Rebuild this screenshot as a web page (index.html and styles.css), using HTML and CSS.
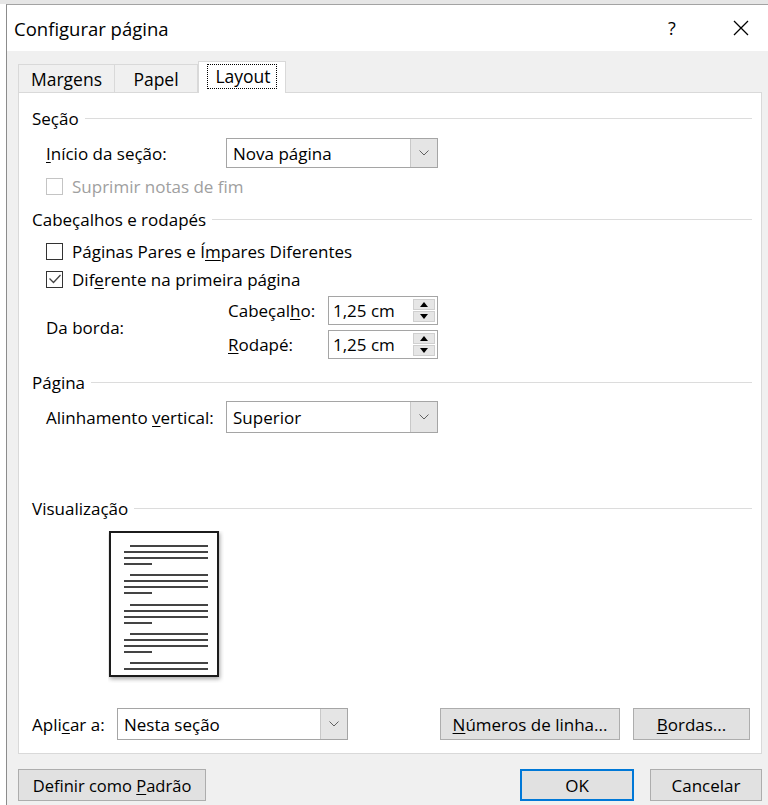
FILE: index.html
```html
<!DOCTYPE html>
<html lang="pt-BR">
<head>
<meta charset="utf-8">
<title>Configurar página</title>
<link rel="stylesheet" href="styles.css">
</head>
<body>
<div class="dialog">
  <header class="titlebar">
    <span class="title">Configurar página</span>
    <span class="help">?</span>
    <span class="close">
      <svg width="16" height="16" viewBox="0 0 16 16"><path d="M1 1 L15 15 M15 1 L1 15" stroke="#000" stroke-width="1.3" fill="none"/></svg>
    </span>
  </header>

  <div class="client">
    <div class="tabs">
      <div class="tab tab-margens">Margens</div>
      <div class="tab tab-papel">Papel</div>
      <div class="tab tab-layout active"><span class="focus">Layout</span></div>
    </div>

    <div class="panel">
      <div class="group-head g-secao"><span>Seção</span></div>
      <div class="row r-inicio indent">
        <span class="col-label"><u>I</u>nício da seção:</span>
        <div class="select sel-wide">
          <span class="value">Nova página</span>
          <span class="drop"><svg width="10" height="6" viewBox="0 0 10 6"><path d="M0.5 0.5 L5 5 L9.5 0.5" stroke="#606060" fill="none"/></svg></span>
        </div>
      </div>
      <div class="row r-suprimir indent disabled">
        <span class="check"></span>
        <span class="check-text">Suprimir notas de fim</span>
      </div>

      <div class="group-head g-cab"><span>Cabeçalhos e rodapés</span></div>
      <div class="row r-pares indent">
        <span class="check"></span>
        <span class="check-text">Páginas Pares e Í<u>m</u>pares Diferentes</span>
      </div>
      <div class="row r-dif indent">
        <span class="check checked"><svg width="14" height="14" viewBox="0 0 14 14"><path d="M1.5 6.5 L5.5 10.5 L12.5 3" stroke="#444" stroke-width="1.3" fill="none"/></svg></span>
        <span class="check-text">Dif<u>e</u>rente na primeira página</span>
      </div>
      <div class="borda indent">
        <span class="col-label">Da borda:</span>
        <div class="spins">
          <div class="spin-row">
            <span class="sub-label">Cabeçal<u>h</u>o:</span>
            <div class="spin">
              <span class="value">1,25 cm</span>
              <span class="arrows">
                <span class="arr"><svg width="8" height="5" viewBox="0 0 8 5"><path d="M4 0 L8 5 L0 5 Z" fill="#000"/></svg></span>
                <span class="arr"><svg width="8" height="5" viewBox="0 0 8 5"><path d="M0 0 L8 0 L4 5 Z" fill="#000"/></svg></span>
              </span>
            </div>
          </div>
          <div class="spin-row">
            <span class="sub-label"><u>R</u>odapé:</span>
            <div class="spin">
              <span class="value">1,25 cm</span>
              <span class="arrows">
                <span class="arr"><svg width="8" height="5" viewBox="0 0 8 5"><path d="M4 0 L8 5 L0 5 Z" fill="#000"/></svg></span>
                <span class="arr"><svg width="8" height="5" viewBox="0 0 8 5"><path d="M0 0 L8 0 L4 5 Z" fill="#000"/></svg></span>
              </span>
            </div>
          </div>
        </div>
      </div>

      <div class="group-head g-pagina"><span>Página</span></div>
      <div class="row r-alinh indent">
        <span class="col-label">Alinhamento <u>v</u>ertical:</span>
        <div class="select sel-wide sel-tall">
          <span class="value">Superior</span>
          <span class="drop"><svg width="10" height="6" viewBox="0 0 10 6"><path d="M0.5 0.5 L5 5 L9.5 0.5" stroke="#606060" fill="none"/></svg></span>
        </div>
      </div>

      <div class="group-head g-visual"><span>Visualização</span></div>
      <div class="preview">
        <svg width="116" height="152" viewBox="0 0 116 152">
          <defs>
            <filter id="pageShadow" x="-20%" y="-20%" width="140%" height="140%">
              <feDropShadow dx="1" dy="2" stdDeviation="2" flood-color="#000" flood-opacity="0.35"/>
            </filter>
          </defs>
          <rect x="2" y="1" width="108" height="144" fill="#fff" stroke="#1a1a1a" stroke-width="2" filter="url(#pageShadow)"/>
          <g stroke="#444" stroke-width="2">
            <path d="M22 15 H100 M16 21 H100 M16 27 H100 M16 33 H44"/>
            <path d="M22 44 H100 M16 50 H100 M16 56 H100 M16 62 H44"/>
            <path d="M22 74 H100 M16 80 H100 M16 86 H100 M16 92 H44"/>
            <path d="M22 103 H100 M16 109 H100 M16 115 H100 M16 121 H44"/>
            <path d="M22 132 H100 M16 138 H100"/>
          </g>
        </svg>
      </div>

      <div class="row r-aplicar">
        <span class="apl-label">Apli<u>c</u>ar a:</span>
        <div class="select sel-apl">
          <span class="value">Nesta seção</span>
          <span class="drop"><svg width="10" height="6" viewBox="0 0 10 6"><path d="M0.5 0.5 L5 5 L9.5 0.5" stroke="#606060" fill="none"/></svg></span>
        </div>
        <button class="btn btn-num"><span><u>N</u>úmeros de linha...</span></button>
        <button class="btn btn-bordas"><span><u>B</u>ordas...</span></button>
      </div>
    </div>

    <div class="footer">
      <button class="btn btn-padrao"><span>Definir como <u>P</u>adrão</span></button>
      <span class="spacer"></span>
      <button class="btn btn-ok default"><span>OK</span></button>
      <button class="btn btn-cancel"><span>Cancelar</span></button>
    </div>
  </div>
</div>
</body>
</html>
```

FILE: styles.css
```css
html, body {
  margin: 0;
  padding: 0;
}

body {
  background: #fff;
  border-top: 4px solid #e6e6e6;
  font-family: "Open Sans", "Noto Sans", sans-serif;
  font-size: 17px;
  color: #000;
  height: 801px;
  overflow: hidden;
}

u {
  text-decoration-thickness: 1px;
  text-underline-offset: 2px;
}

.dialog {
  margin-left: 6px;
  border-top: 1px solid #a3a3a3;
  border-left: 1px solid #8c8c8c;
  height: 800px;
  display: flex;
  flex-direction: column;
}

/* title bar */
.titlebar {
  height: 46px;
  background: #fff;
  display: flex;
  align-items: center;
  padding-left: 7px;
}

.title {
  font-size: 18.5px;
  flex: 1;
}

.help {
  width: 14px;
  font-size: 18px;
  margin-right: 51px;
}

.close {
  width: 16px;
  height: 16px;
  margin-right: 19px;
  display: flex;
}

/* dialog body */
.client {
  flex: 1;
  background: #f0f0f0;
  padding: 10px 6px 0 11px;
}

.tabs {
  height: 31px;
  display: flex;
  align-items: flex-end;
  position: relative;
  z-index: 1;
}

.tab {
  height: 28px;
  box-sizing: border-box;
  border: 1px solid #d9d9d9;
  border-bottom: none;
  display: flex;
  align-items: center;
  justify-content: center;
  font-size: 17.5px;
}

.tab + .tab {
  border-left: none;
}

.tab-margens { width: 97px; }
.tab-papel { width: 83px; }

.tab-layout {
  width: 88px;
  height: 32px;
  margin-bottom: -1px;
  background: #fff;
  border-left: 1px solid #d9d9d9 !important;
  padding-bottom: 3px;
}

.focus {
  outline: 1px dotted #000;
  outline-offset: 0;
  padding: 0 5px 0 7px;
  line-height: 23px;
}

.panel {
  background: #fff;
  border: 1px solid #d9d9d9;
  padding: 0 9px 13px 13px;
}

/* group headings with trailing rule */
.group-head {
  height: 20px;
  display: flex;
  align-items: center;
  gap: 6px;
}

.group-head::after {
  content: "";
  flex: 1;
  height: 1px;
  background: #dcdcdc;
}

.g-secao { margin-top: 15px; }
.g-cab { margin-top: 13px; }
.g-pagina { margin-top: 13px; }
.g-visual { margin-top: 65px; }

.row {
  display: flex;
  align-items: center;
}

.indent {
  padding-left: 14px;
}

.col-label {
  width: 180px;
  flex: none;
}

.r-inicio { margin-top: 10px; }
.r-suprimir { margin-top: 8px; height: 20px; }
.r-pares { margin-top: 12px; height: 20px; }
.r-dif { margin-top: 8px; height: 20px; }
.r-alinh { margin-top: 9px; }
.r-aplicar { margin-top: 27px; }

/* selects */
.select {
  box-sizing: border-box;
  height: 30px;
  border: 1px solid #a5a5a5;
  background: #fff;
  display: flex;
}

.sel-wide { width: 212px; }
.sel-tall { height: 32px; }

.select .value {
  flex: 1;
  display: flex;
  align-items: center;
  padding-left: 6px;
}

.select .drop {
  width: 26px;
  background: #e5e5e5;
  border-left: 1px solid #c8c8c8;
  display: flex;
  align-items: center;
  justify-content: center;
}

/* checkboxes */
.check {
  width: 17px;
  height: 17px;
  box-sizing: border-box;
  border: 1px solid #333;
  background: #fff;
  display: flex;
  align-items: center;
  justify-content: center;
  flex: none;
}

.check-text {
  margin-left: 9px;
}

.disabled .check {
  border-color: #c4c4c4;
}

.disabled .check-text {
  color: #a0a0a0;
}

/* distance from edge */
.borda {
  margin-top: 7px;
  display: flex;
  align-items: center;
}

.spins {
  display: flex;
  flex-direction: column;
  gap: 5px;
}

.spin-row {
  display: flex;
  align-items: center;
}

.sub-label {
  width: 102px;
  padding-left: 2px;
  box-sizing: border-box;
}

.spin {
  width: 110px;
  height: 29px;
  box-sizing: border-box;
  border: 1px solid #a5a5a5;
  display: flex;
  background: #fff;
}

.spin .value {
  flex: 1;
  display: flex;
  align-items: center;
  padding-left: 4px;
}

.arrows {
  width: 22px;
  margin: 2px 2px 2px 0;
  display: flex;
  flex-direction: column;
  gap: 1px;
}

.arr {
  flex: 1;
  background: #e6e6e6;
  border: 1px solid #cfcfcf;
  display: flex;
  align-items: center;
  justify-content: center;
}

/* preview page */
.preview {
  margin-top: 13px;
  padding-left: 76px;
  height: 150px;
}

.preview svg {
  display: block;
}

/* apply row */
.apl-label {
  width: 85px;
}

.sel-apl {
  width: 231px;
  height: 32px;
}

.btn {
  font: inherit;
  color: #000;
  height: 32px;
  box-sizing: border-box;
  background: #e1e1e1;
  border: 1px solid #adadad;
  padding: 0;
  display: flex;
  align-items: center;
  justify-content: center;
}

.btn-num {
  width: 180px;
  margin-left: 92px;
}

.btn-bordas {
  width: 117px;
  margin-left: 13px;
}

.footer {
  margin-top: 15px;
  display: flex;
}

.spacer {
  flex: 1;
}

.btn-padrao { width: 188px; font-size: 16.5px; }
.btn-ok { width: 114px; }
.btn-cancel { width: 112px; margin-left: 16px; }

.btn.default {
  border: 2px solid #0078d7;
}
```
